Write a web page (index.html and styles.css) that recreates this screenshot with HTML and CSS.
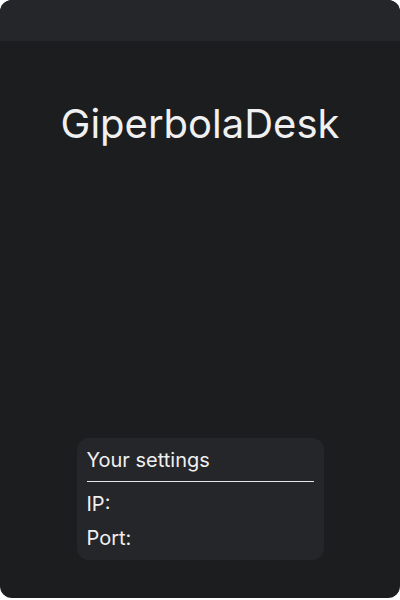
FILE: index.html
```html
<!DOCTYPE html>
<html lang="en">
<head>
<meta charset="utf-8">
<title>GiperbolaDesk</title>
<link rel="stylesheet" href="styles.css">
</head>
<body>
<div class="window">
  <div class="titlebar"></div>
  <main class="content">
    <h1 class="app-title">GiperbolaDesk</h1>
    <section class="settings">
      <div class="settings-head">Your settings</div>
      <div class="divider"></div>
      <div class="settings-row">IP:</div>
      <div class="settings-row">Port:</div>
    </section>
  </main>
</div>
</body>
</html>
```
FILE: styles.css
```css
html, body {
  margin: 0;
  padding: 0;
  background: #ffffff;
}
body {
  font-family: Inter, "Noto Sans", sans-serif;
  color: #f0f0f0;
}
.window {
  width: 400px;
  height: 598px;
  border-radius: 12px;
  overflow: hidden;
  background: #1c1d1f;
  display: flex;
  flex-direction: column;
}
.titlebar {
  height: 41px;
  flex: none;
  background: #25262a;
}
.content {
  flex: 1;
  display: flex;
  flex-direction: column;
  align-items: center;
  padding: 59px 0 38px;
}
.app-title {
  margin: 0;
  font-size: 40px;
  font-weight: 400;
  line-height: 48px;
}
.settings {
  margin-top: auto;
  width: 247px;
  box-sizing: border-box;
  padding: 10px;
  border-radius: 12px;
  background: #25262a;
  display: flex;
  flex-direction: column;
  gap: 10px;
  font-size: 20px;
  line-height: 24px;
}
.settings-head {
  margin-bottom: -1px;
}
.divider {
  height: 1px;
  background: #e6e6e6;
}
```
